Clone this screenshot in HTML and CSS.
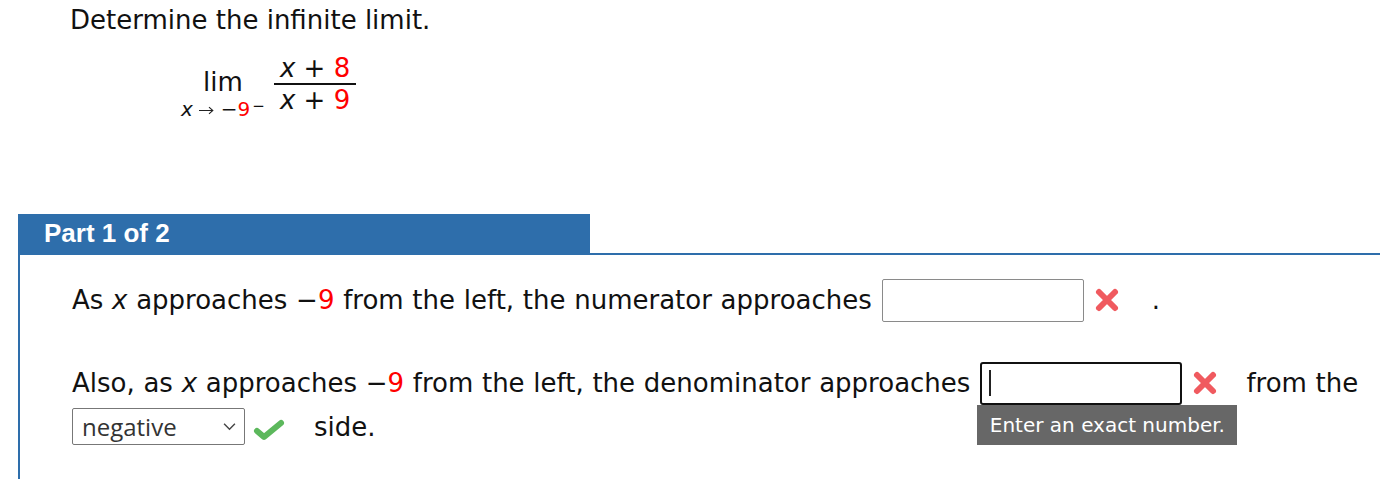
FILE: index.html
```html
<!DOCTYPE html>
<html>
<head>
<meta charset="utf-8">
<link rel="stylesheet" href="styles.css">
</head>
<body>
<div class="question">
  <div class="prompt">Determine the infinite limit.</div>
  <div class="limit">
    <div class="lim-op">
      <span class="lim-word">lim</span>
      <span class="lim-sub"><i>x</i><svg class="arrow" viewBox="0 0 15 9"><path d="M0 4.5 H13.5 M10 1.2 L13.8 4.5 L10 7.8" fill="none" stroke="#222" stroke-width="1.1"/></svg>−<span class="red">9</span><sup>−</sup></span>
    </div>
    <div class="frac">
      <span class="num"><i>x</i> + <span class="red">8</span></span>
      <span class="den"><i>x</i> + <span class="red">9</span></span>
    </div>
  </div>
</div>

<div class="part">
  <div class="part-tab">Part 1 of 2</div>
  <div class="part-body">
    <div class="line line1">
      <span>As <i>x</i> approaches −<span class="red">9</span> from the left, the numerator approaches</span>
      <span class="answer"><span class="box"></span></span>
      <svg class="mark x" viewBox="0 0 26 26"><path d="M5 5 L21 21 M21 5 L5 21" stroke="#f05a5f" stroke-width="6" stroke-linecap="round"/></svg>
      <span class="dot">.</span>
    </div>
    <div class="line line2">
      <span>Also, as <i>x</i> approaches −<span class="red">9</span> from the left, the denominator approaches</span>
      <span class="answer">
        <span class="box focus"><span class="caret"></span></span>
        <span class="tip">Enter an exact number.</span>
      </span>
      <svg class="mark x" viewBox="0 0 26 26"><path d="M5 5 L21 21 M21 5 L5 21" stroke="#f05a5f" stroke-width="6" stroke-linecap="round"/></svg>
      <span class="after">from the</span>
    </div>
    <div class="line line3">
      <span class="select">negative<svg class="chev" viewBox="0 0 12 8"><path d="M1 1.5 L6 6.5 L11 1.5" fill="none" stroke="#444" stroke-width="1.3"/></svg></span>
      <svg class="mark check" viewBox="0 0 34 24"><path d="M5 13 L12 19 L29 5" fill="none" stroke="#5cb85c" stroke-width="6" stroke-linecap="round" stroke-linejoin="round"/></svg>
      <span class="side">side.</span>
    </div>
  </div>
</div>
</body>
</html>
```
FILE: styles.css
```css
html, body {
  margin: 0;
  padding: 0;
  background: #fff;
}
body {
  font-family: "DejaVu Sans", Verdana, sans-serif;
  color: #111;
  width: 1380px;
  height: 479px;
  overflow: hidden;
}
i { font-style: italic; }
.red { color: #ff0000; }

.question {
  padding: 3px 0 0 70px;
  height: 214px;
  box-sizing: border-box;
}
.prompt {
  font-size: 26px;
  line-height: 34px;
}
.limit {
  display: flex;
  align-items: flex-start;
  margin: 18px 0 0 111px;
  font-size: 26px;
}
.lim-op {
  display: flex;
  flex-direction: column;
  align-items: center;
  margin-top: 14px;
}
.lim-word { line-height: 26px; }
.lim-sub {
  font-size: 20px;
  line-height: 20px;
  margin-top: 1px;
}
.lim-sub .arrow {
  width: 15px;
  height: 9px;
  margin: 0 7px 0 6px;
  vertical-align: 1px;
}
.lim-sub sup { font-size: 15px; vertical-align: 5px; margin-left: 2px; }
.frac {
  display: flex;
  flex-direction: column;
  align-items: center;
  margin-left: 9px;
}
.frac .num {
  padding: 0 6px 1px;
  border-bottom: 2px solid #111;
  line-height: 27px;
}
.frac .den { line-height: 30px; padding: 0 6px; }

.part {
  margin-left: 18px;
}
.part-tab {
  width: 546px;
  height: 39px;
  background: #2e6eab;
  color: #fff;
  font-family: "Liberation Sans", Arial, sans-serif;
  font-weight: bold;
  font-size: 26px;
  line-height: 39px;
  padding-left: 26px;
}
.part-body {
  border-top: 2px solid #2e6eab;
  border-left: 2px solid #2e6eab;
  height: 201px;
  padding: 23px 0 0 52px;
  font-size: 26px;
  word-spacing: 0.45px;
}
.line {
  display: flex;
  align-items: center;
}
.line1 { height: 44px; }
.line2 { height: 44px; margin-top: 39px; }
.line3 { height: 39px; margin-top: 2px; }
.answer {
  position: relative;
  margin-left: 10px;
  display: flex;
}
.box {
  width: 200px;
  height: 41px;
  border: 1px solid #8a8a8a;
  border-radius: 2px;
  background: #fff;
  display: flex;
  align-items: center;
}
.box.focus {
  border: 2px solid #111;
  border-radius: 3px;
  width: 198px;
  height: 39px;
}
.caret {
  display: block;
  width: 2px;
  height: 26px;
  background: #222;
  margin-left: 7px;
}
.tip {
  position: absolute;
  left: -3px;
  top: 43px;
  width: 260px;
  height: 40px;
  background: #676767;
  color: #fff;
  font-size: 20px;
  line-height: 40px;
  text-align: center;
  white-space: nowrap;
  word-spacing: 0;
}
.mark.x {
  width: 26px;
  height: 26px;
  margin-left: 10px;
}
.dot { margin-left: 32px; }
.after { margin-left: 28px; }
.select {
  display: flex;
  align-items: center;
  justify-content: space-between;
  box-sizing: border-box;
  width: 173px;
  height: 37px;
  border: 1px solid #777;
  border-radius: 2px;
  padding: 0 8px 0 9px;
  font-family: "Open Sans", "Liberation Sans", sans-serif;
  font-size: 24px;
  color: #333;
}
.chev { width: 13px; height: 9px; }
.mark.check {
  width: 34px;
  height: 24px;
  margin-left: 7px;
  margin-top: 6px;
}
.side { margin-left: 28px; }
```
